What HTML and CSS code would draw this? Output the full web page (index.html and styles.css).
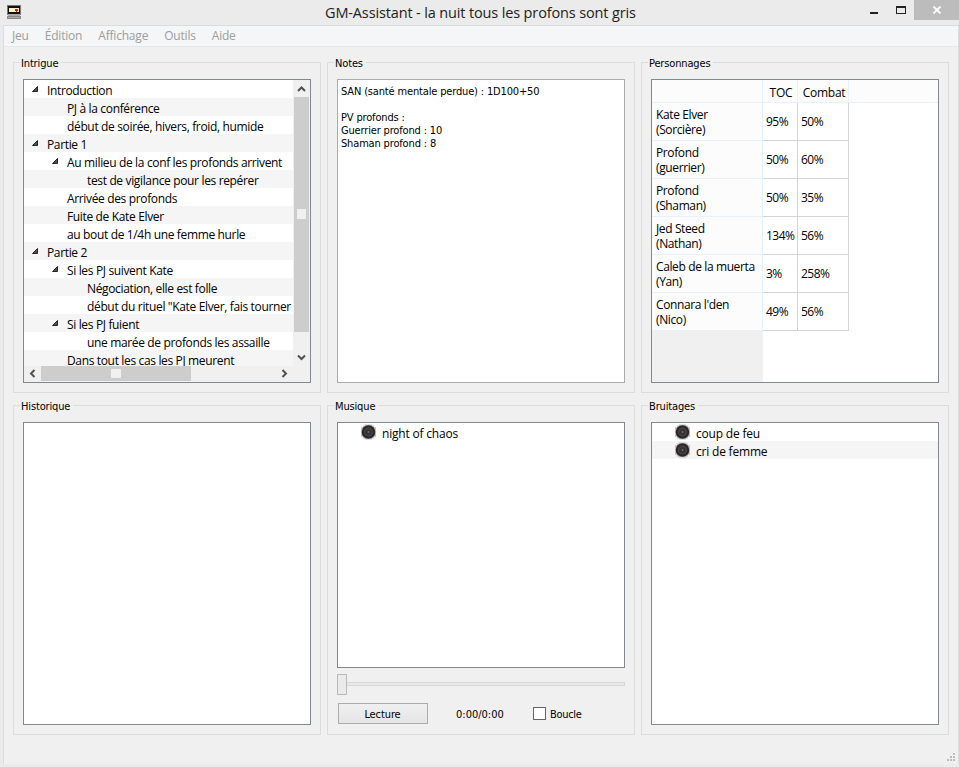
FILE: index.html
```html
<!DOCTYPE html>
<html lang="fr">
<head>
<meta charset="utf-8">
<title>GM-Assistant</title>
<link rel="stylesheet" href="styles.css">
</head>
<body>
<svg width="0" height="0" class="defs">
  <symbol id="speaker" viewBox="0 0 16 16">
    <path d="M4 0h8v1h2v2h2v10h-2v2h-2v1H4v-1H2v-2H0V3h2V1h2z" fill="#bdbdbd"/>
    <circle cx="8" cy="8" r="7.2" fill="#282626"/>
    <circle cx="8" cy="8" r="5" fill="#433e40"/>
    <circle cx="8" cy="8" r="3" fill="#353031"/>
    <circle cx="8" cy="8" r="1" fill="#777073"/>
  </symbol>
  <symbol id="arrow" viewBox="0 0 8 8"><path d="M6.500 1.500v5h-5z" fill="#505050" stroke="#262626"/></symbol>
</svg>
<header class="titlebar">
  <svg class="app-icon" width="14" height="15" viewBox="0 0 14 15" shape-rendering="crispEdges">
    <path fill="#777" d="M0 0h14v10H0z"/><path fill="#111" d="M1 1h12v8H1z"/><path fill="#fff2c3" d="M2 3h10v4H2z"/>
    <path fill="#d3222c" d="M8 4h3v2H8zM9 6h1v1H9z"/><path fill="#aaa" d="M1 9h12v2H1z"/><path fill="#888" d="M0 11h14v3H0z"/><path fill="#aaa" d="M1 12h12v1H1z"/>
  </svg>
  <h1>GM-Assistant - la nuit tous les profons sont gris</h1>
  <div class="controls">
    <i class="min"></i><i class="max"></i>
    <div class="close"><svg width="10" height="8" viewBox="0 0 10 8"><path d="M1.500.5l7 7M8.500.5l-7 7" stroke="#fff" stroke-width="1.800"/></svg></div>
  </div>
</header>
<div class="client">
  <nav class="menu"><span>Jeu</span><span>Édition</span><span>Affichage</span><span>Outils</span><span>Aide</span></nav>
  <main class="panels">
    <section class="group"><h2>Intrigue</h2>
      <div class="box tree-box">
        <div class="tree">
          <div class="row l0"><svg><use href="#arrow"/></svg><span>Introduction</span></div>
          <div class="row l1"><span>PJ à la conférence</span></div>
          <div class="row l1"><span>début de soirée, hivers, froid, humide</span></div>
          <div class="row l0"><svg><use href="#arrow"/></svg><span>Partie 1</span></div>
          <div class="row l1"><svg><use href="#arrow"/></svg><span>Au milieu de la conf les profonds arrivent</span></div>
          <div class="row l2"><span>test de vigilance pour les repérer</span></div>
          <div class="row l1"><span>Arrivée des profonds</span></div>
          <div class="row l1"><span>Fuite de Kate Elver</span></div>
          <div class="row l1"><span>au bout de 1/4h une femme hurle</span></div>
          <div class="row l0"><svg><use href="#arrow"/></svg><span>Partie 2</span></div>
          <div class="row l1"><svg><use href="#arrow"/></svg><span>Si les PJ suivent Kate</span></div>
          <div class="row l2"><span>Négociation, elle est folle</span></div>
          <div class="row l2"><span>début du rituel "Kate Elver, fais tourner t</span></div>
          <div class="row l1"><svg><use href="#arrow"/></svg><span>Si les PJ fuient</span></div>
          <div class="row l2"><span>une marée de profonds les assaille</span></div>
          <div class="row l1"><span>Dans tout les cas les PJ meurent</span></div>
        </div>
        <div class="vbar">
          <svg width="15" height="17"><path d="M4 11l3.500-3.500L11 11" class="chev"/></svg>
          <div class="thumb"><i></i></div>
          <svg width="15" height="17"><path d="M4 6.500L7.500 10 11 6.500" class="chev"/></svg>
        </div>
        <div class="hbar">
          <svg width="17" height="15"><path d="M10.500 4L7 7.500l3.500 3.500" class="chev"/></svg>
          <div class="thumb"><i></i></div>
          <svg width="17" height="15"><path d="M6.500 4L10 7.500 6.500 11" class="chev"/></svg>
        </div>
      </div>
    </section>
    <section class="group"><h2>Notes</h2>
      <div class="box notes"><p>SAN (santé mentale perdue) : 1D100+50</p><p>&nbsp;</p><p>PV profonds :</p><p>Guerrier profond : 10</p><p>Shaman profond : 8</p></div>
    </section>
    <section class="group"><h2>Personnages</h2>
      <div class="box table-box">
        <div class="table">
          <div class="h"></div><div class="h c">TOC</div><div class="h c">Combat</div><div class="h last"></div>
          <div class="n">Kate Elver<br>(Sorcière)</div><div class="v">95%</div><div class="v">50%</div><div></div>
          <div class="n">Profond<br>(guerrier)</div><div class="v">50%</div><div class="v">60%</div><div></div>
          <div class="n">Profond<br>(Shaman)</div><div class="v">50%</div><div class="v">35%</div><div></div>
          <div class="n">Jed Steed<br>(Nathan)</div><div class="v">134%</div><div class="v">56%</div><div></div>
          <div class="n">Caleb de la muerta<br>(Yan)</div><div class="v">3%</div><div class="v">258%</div><div></div>
          <div class="n">Connara l'den<br>(Nico)</div><div class="v">49%</div><div class="v">56%</div><div></div>
          <div class="rest"></div>
        </div>
      </div>
    </section>
    <section class="group"><h2>Historique</h2><div class="box"></div></section>
    <section class="group"><h2>Musique</h2>
      <div class="box list"><div class="row"><svg><use href="#speaker"/></svg><span>night of chaos</span></div></div>
      <div class="slider"><i class="handle"></i><i class="groove"></i></div>
      <div class="player"><button>Lecture</button><span class="time">0:00/0:00</span><i class="check"></i><span class="loop">Boucle</span></div>
    </section>
    <section class="group"><h2>Bruitages</h2>
      <div class="box list"><div class="row"><svg><use href="#speaker"/></svg><span>coup de feu</span></div><div class="row"><svg><use href="#speaker"/></svg><span>cri de femme</span></div></div>
    </section>
  </main>
  <svg class="grip" width="8" height="8" fill="#bcbcbc"><path d="M6 0h2v2H6zM3 3h2v2H3zM6 3h2v2H6zM0 6h2v2H0zM3 6h2v2H3zM6 6h2v2H6z"/></svg>
</div>
</body>
</html>
```
FILE: styles.css
```css
* { box-sizing: border-box; }
body { margin: 0; width: 959px; height: 767px; overflow: hidden; background: #ebebeb; color: #000; font: 12px/18px "Open Sans", sans-serif; display: flex; flex-direction: column; }
.defs { position: absolute; }
svg { display: block; flex: none; }
i { display: block; }
h1, h2, p { margin: 0; font-weight: normal; }
.titlebar { height: 25px; flex: none; display: flex; }
.app-icon { margin: 5px 0 0 7px; }
h1 { flex: 1; font-size: 14.5px; line-height: 25px; padding-left: 304px; white-space: nowrap; color: #222; letter-spacing: -0.14px; }
.controls { display: flex; }
.min { width: 8px; height: 2px; background: #222; margin: 12px 18px 0 0; }
.max { width: 10px; height: 8px; border: 1px solid #222; border-top-width: 2px; margin: 6px 8px 0 0; }
.close { width: 45px; height: 20px; background: #bcbcbc; display: flex; align-items: center; justify-content: center; }
.client { position: relative; margin: 0 0 0 3px; height: 739px; border: 1px solid #dcdcdc; border-bottom: 0; background: #f0f0f0; }
.menu { height: 21px; background: #f5f6f7; border-bottom: 1px solid #e5e8ea; display: flex; gap: 16px; padding-left: 8px; line-height: 20px; color: #9d9d9d; letter-spacing: -0.2px; }
.panels { display: grid; grid-template-columns: repeat(3, 308px); grid-template-rows: 331px 330px; gap: 12px 6px; padding: 15px 0 0 9px; }
.group { border: 1px solid #dcdcdc; padding: 0 9px 9px; display: flex; flex-direction: column; min-width: 0; }
h2 { align-self: flex-start; height: 14px; margin: -6px 0 8px -3px; padding: 0 3px 0 1px; background: #f0f0f0; font: 11px/14px "DejaVu Sans Condensed", sans-serif; letter-spacing: -0.15px; }
.box { flex: 1; border: 1px solid #828790; background: #fff; min-height: 0; overflow: hidden; }
.row { height: 18px; display: flex; align-items: center; white-space: nowrap; }
.row:nth-child(even) { background: #f5f5f5; }
.tree-box { display: grid; grid-template: 286px 16px / 269px 17px; background: #f0f0f0; }
.tree { overflow: hidden; background: #fff; letter-spacing: -0.35px; }
.tree .row { padding-top: 3px; }
.tree .row svg { width: 8px; height: 8px; margin: -3px 8px 0 -16px; }
.l0 { padding-left: 23px; }
.l1 { padding-left: 43px; }
.l2 { padding-left: 63px; }
.vbar { margin-left: 1px; width: 15px; height: 286px; display: flex; flex-direction: column; }
.vbar .thumb { height: 235px; margin-bottom: 17px; background: #cdcdcd; padding: 112px 0 0 3px; }
.thumb i { width: 9px; height: 10px; background: #f0f0f0; }
.chev { fill: none; stroke: #505050; stroke-width: 2; }
.hbar { height: 15px; width: 269px; display: flex; }
.hbar .thumb { width: 150px; margin-right: 85px; background: #cdcdcd; padding: 3px 0 0 70px; }
.hbar .thumb i { width: 10px; height: 9px; }
.notes { border-color: #ababab; padding: 5px 3px; font: 11px/13px "DejaVu Sans Condensed", sans-serif; letter-spacing: -0.16px; }
.table { display: grid; grid-template-columns: 111px 35px 51px 89px; grid-template-rows: 23px repeat(6, 38px) 51px; line-height: 15px; }
.h { background: #fcfcfc; border: solid #e5f1fb; border-width: 0 1px 1px 0; }
.h.c { display: flex; align-items: center; justify-content: center; padding: 2px 0 0 2px; letter-spacing: -0.25px; }
.h.last { border-right: 0; }
.n { background: #fcfcfc; border: solid #e5f1fb; border-width: 0 1px 1px 0; padding: 4px 0 0 4px; white-space: nowrap; letter-spacing: -0.38px; }
.v { border: solid #d5d5d5; border-width: 0 1px 1px 0; padding: 11px 0 0 3px; letter-spacing: -0.5px; }
.rest { background: #f0f0f0; }
.list .row { padding: 3px 0 0 23px; letter-spacing: -0.2px; }
.list svg { width: 15px; height: 16px; margin: -4px 6px 0 0; }
.slider { height: 21px; margin-top: 6px; display: flex; align-items: center; }
.handle { width: 10px; height: 21px; border: 1px solid #bababa; background: #eaeaea; }
.groove { flex: 1; height: 4px; border: 1px solid #d6d6d6; border-left: 0; background: #e7eaea; margin-top: -1px; }
.player { height: 21px; margin: 8px 0 1px 1px; display: flex; align-items: center; font: 11px/14px "DejaVu Sans Condensed", sans-serif; }
button { width: 90px; height: 21px; border: 1px solid #acacac; background: linear-gradient(#f0f0f0, #e5e5e5); font: inherit; color: #000; padding: 2px 1px 0 0; letter-spacing: -0.1px; }
.time { margin-left: 28px; width: 77px; padding-top: 2px; }
.check { width: 13px; height: 13px; border: 1px solid #666; background: #fff; margin-right: 4px; }
.loop { padding-top: 2px; letter-spacing: -0.3px; }
.grip { position: absolute; right: 3px; bottom: 3px; }
```
